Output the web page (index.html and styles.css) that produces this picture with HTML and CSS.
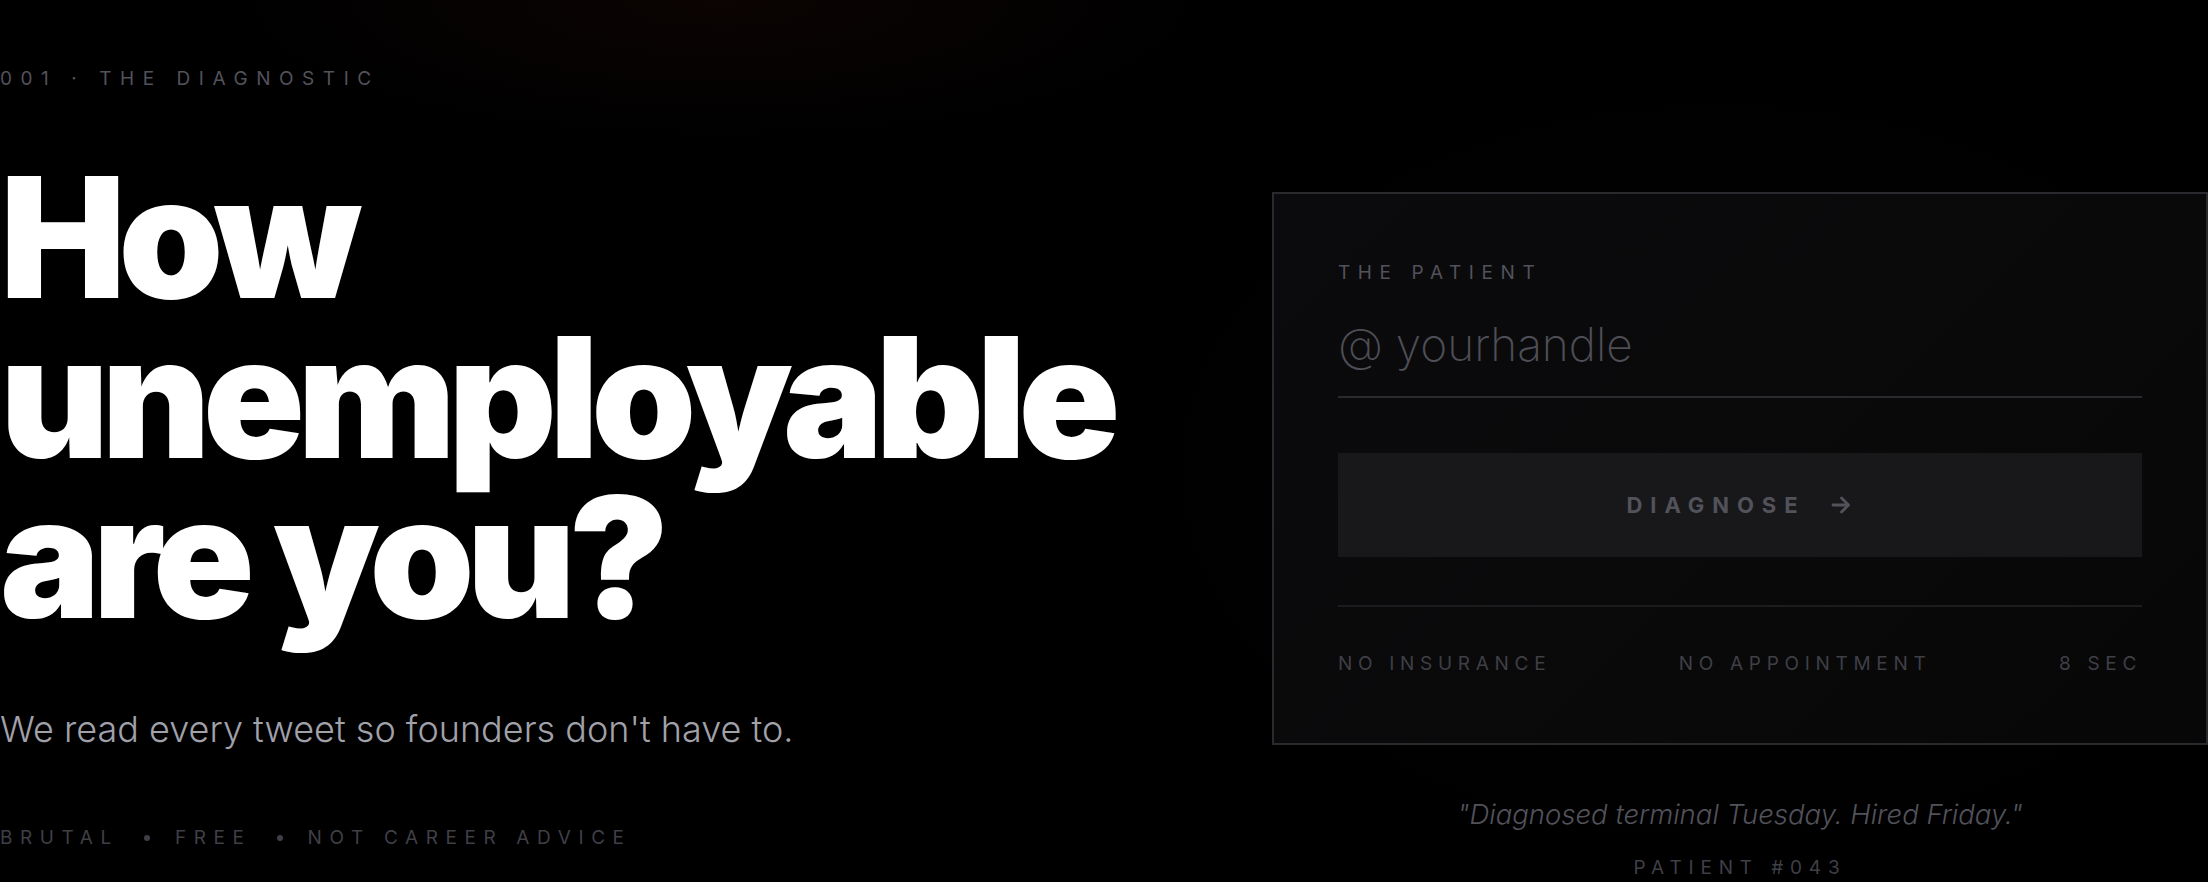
FILE: index.html
```html
<!DOCTYPE html>
<html lang="en">
<head>
  <meta charset="UTF-8">
  <meta name="viewport" content="width=device-width, initial-scale=1.0">
  <title>The Diagnostic</title>
  <link rel="stylesheet" href="styles.css">
</head>
<body>
<main class="page">

  <section class="intro">
    <p class="eyebrow">001 &middot; The Diagnostic</p>
    <h1 class="headline">How<br>unemployable<br>are you?</h1>
    <p class="lede">We read every tweet so founders don't have to.</p>
    <ul class="tags">
      <li>Brutal</li>
      <li class="dot"></li>
      <li>Free</li>
      <li class="dot"></li>
      <li>Not career advice</li>
    </ul>
  </section>

  <section class="side">
    <form class="card" onsubmit="return false">
      <label class="card-label" for="handle">The patient</label>
      <input class="handle" id="handle" type="text" placeholder="@ yourhandle" autocomplete="off">
      <button class="diagnose" type="submit">
        Diagnose
        <svg viewBox="0 0 24 24" width="24" height="24" fill="none" stroke="currentColor" stroke-width="2.8" stroke-linecap="round" stroke-linejoin="round"><path d="M4 12h15"/><path d="M12.5 5 19.5 12 12.5 19"/></svg>
      </button>
      <div class="card-foot">
        <span>No insurance</span>
        <span>No appointment</span>
        <span>8 sec</span>
      </div>
    </form>

    <blockquote class="quote">"Diagnosed terminal Tuesday. Hired Friday."</blockquote>
    <p class="quote-by">Patient #043</p>
  </section>

</main>
</body>
</html>
```

FILE: styles.css
```css
html, body {
  margin: 0;
  height: 100%;
}
body {
  background-color: #000000;
  background-image:
    radial-gradient(ellipse 700px 200px at 720px 0px, rgba(36, 12, 10, 0.3), transparent 70%),
    radial-gradient(ellipse 820px 560px at 1720px 470px, rgba(40, 16, 14, 0.18), transparent 70%);
  color: #ffffff;
  font-family: Inter, "Noto Sans", sans-serif;
  overflow: hidden;
}
.page {
  display: grid;
  grid-template-columns: 1272px 936px;
  height: 882px;
}

/* left column */
.intro {
  padding-top: 65px;
}
.eyebrow {
  margin: 0;
  font-size: 19px;
  line-height: 27px;
  letter-spacing: 0.45em;
  text-transform: uppercase;
  color: #52525b;
}
.headline {
  margin: 65px 0 0;
  font-size: 168px;
  line-height: 160px;
  font-weight: 900;
  letter-spacing: -0.045em;
  color: #ffffff;
}
.lede {
  margin: 71px 0 0;
  font-size: 36px;
  line-height: 43px;
  font-weight: 300;
  color: #a1a1aa;
}
.tags {
  list-style: none;
  margin: 73px 0 0;
  padding: 0;
  display: flex;
  align-items: center;
  gap: 25px;
  font-size: 19px;
  line-height: 27px;
  letter-spacing: 0.4em;
  text-transform: uppercase;
  color: #3f3f46;
}
.tags .dot {
  width: 6px;
  height: 6px;
  border-radius: 50%;
  background: #3f3f46;
}

/* right column */
.side {
  padding-top: 192px;
  text-align: center;
}
.card {
  display: flex;
  flex-direction: column;
  padding: 65px 64px 66px;
  border: 2px solid #2a2a2e;
  background: linear-gradient(135deg, #0b0b0d 0%, #09090a 60%, #070708 100%);
  text-align: left;
}
.card-label {
  font-size: 19px;
  line-height: 27px;
  letter-spacing: 0.4em;
  text-transform: uppercase;
  color: #52525b;
}
.handle {
  margin-top: 31px;
  padding: 0 0 24px;
  border: none;
  border-bottom: 2px solid #2a2a2e;
  background: transparent;
  font-family: inherit;
  font-size: 46px;
  line-height: 55px;
  font-weight: 200;
  color: #d4d4d8;
  outline: none;
}
.handle::placeholder {
  color: #4e4e56;
}
.diagnose {
  margin-top: 55px;
  height: 104px;
  display: flex;
  align-items: center;
  justify-content: center;
  gap: 24px;
  border: none;
  background: #18181b;
  font-family: inherit;
  font-size: 22px;
  font-weight: 700;
  letter-spacing: 0.36em;
  text-transform: uppercase;
  color: #52525b;
  cursor: pointer;
}
.diagnose svg {
  flex: none;
}
.card-foot {
  margin-top: 48px;
  padding-top: 43px;
  border-top: 2px solid #1c1c1f;
  display: flex;
  justify-content: space-between;
  font-size: 19px;
  line-height: 27px;
  letter-spacing: 0.3em;
  text-transform: uppercase;
  color: #3f3f46;
}

.quote {
  margin: 52px 0 0;
  font-size: 27.5px;
  line-height: 34px;
  font-style: italic;
  font-weight: 300;
  color: #52525b;
}
.quote-by {
  margin: 23px 0 0;
  font-size: 19px;
  line-height: 27px;
  letter-spacing: 0.36em;
  text-transform: uppercase;
  color: #3f3f46;
}
```
